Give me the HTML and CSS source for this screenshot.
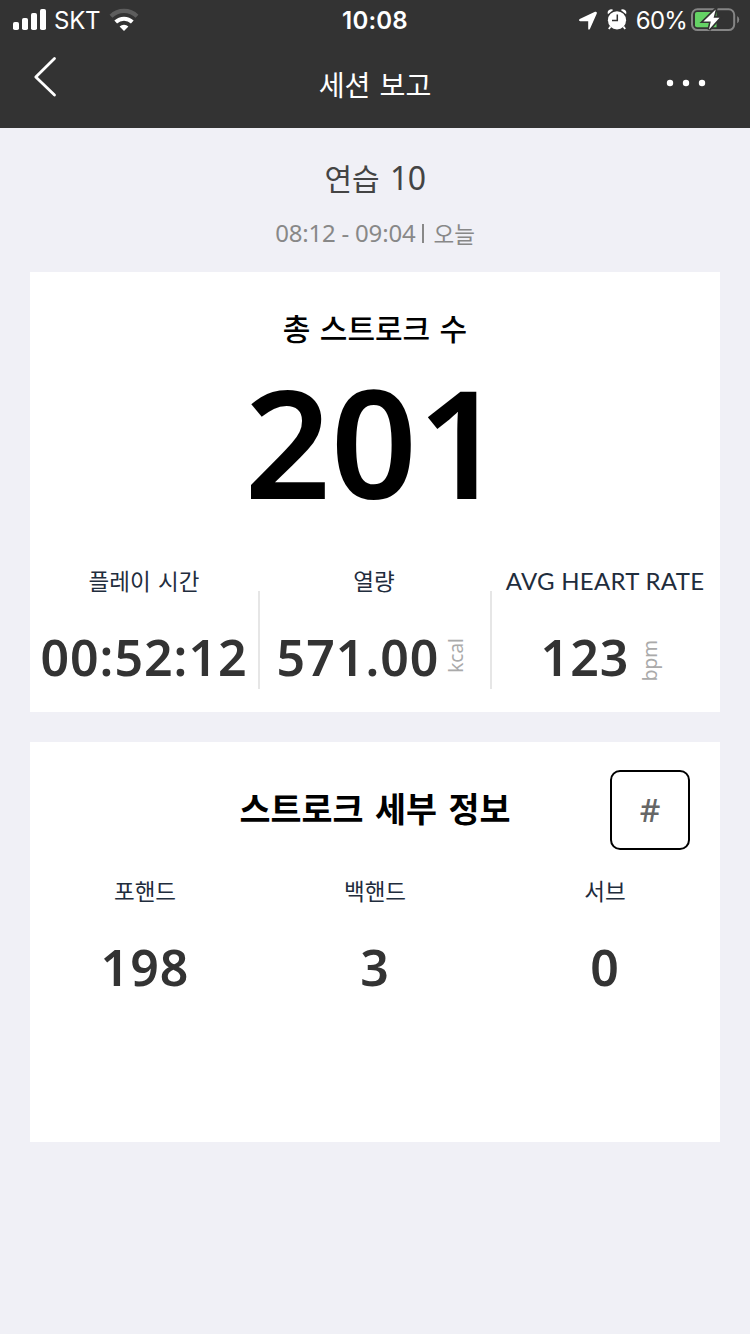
FILE: index.html
```html
<!DOCTYPE html>
<html lang="ko">
<head>
<meta charset="utf-8">
<title>세션 보고</title>
<link rel="stylesheet" href="styles.css">
</head>
<body>
<header class="top">
  <div class="status">
    <div class="status-left">
      <svg class="signal" width="34" height="22" viewBox="0 0 34 22" fill="#fff"><rect x="0" y="13" width="6" height="8" rx="1.8"/><rect x="9" y="9" width="6" height="12" rx="1.8"/><rect x="18" y="4" width="6" height="17" rx="1.8"/><rect x="27" y="0" width="6" height="21" rx="1.8"/></svg>
      <span class="carrier">SKT</span>
      <svg class="wifi" width="30" height="22" viewBox="0 0 30 22" fill="none"><path d="M2 7.2A18.5 18.5 0 0 1 28 7.2" stroke="#5d5d5d" stroke-width="4.2"/><path d="M6.7 13A12.2 12.2 0 0 1 23.3 13" stroke="#fff" stroke-width="4"/><path d="M10.6 17.4A6.5 6.5 0 0 1 19.4 17.4L15 22Z" fill="#fff"/></svg>
    </div>
    <span class="clock">10:08</span>
    <div class="status-right">
      <svg class="location" width="18" height="18" viewBox="0 0 18 18"><path d="M.7 7 16-.2Q18.4-.8 17.8 1.6L11 16.8Q9.7 18.8 9.2 16.8V9.2H1.2Q-1 8.4.7 7Z" fill="#fff"/></svg>
      <svg class="alarm" width="20" height="21" viewBox="0 0 20 21"><path d="M3.6 17.5 1.8 20M16.4 17.5l1.8 2.5" stroke="#fff" stroke-width="1.8"/><circle cx="10" cy="11.3" r="9.1" fill="#fff"/><path d="M.9 5.2Q-.1 1.8 3 .6 5-.1 6.2 1.1ZM19.1 5.2Q20.1 1.8 17 .6 15-.1 13.8 1.1Z" fill="#fff"/><path d="M10.3 5.5v6H5" stroke="#333" stroke-width="1.5" fill="none"/></svg>
      <span class="percent">60%</span>
      <svg class="battery" width="48" height="24" viewBox="0 0 48 24"><rect x="1" y="1.3" width="42.2" height="20.8" rx="5.5" fill="none" stroke="#858585" stroke-width="2"/><path d="M46.2 8q2 1 2 3.6t-2 3.6Z" fill="#858585"/><path d="M6 4H25.5V19.2H6Q4 19.2 4 17.2V6Q4 4 6 4Z" fill="#65d265"/><path d="M24.7 1.4 12.4 13.5H19.8L18 21.6 28.5 9.7H22.6Z" fill="#fff" stroke="#333" stroke-width="3.2" paint-order="stroke"/></svg>
    </div>
  </div>
  <nav class="nav">
    <svg class="back" width="24" height="40" viewBox="0 0 24 40"><path d="M20.5 1.5 1.8 20 20.5 38" fill="none" stroke="#fff" stroke-width="2.8" stroke-linecap="round" stroke-linejoin="round"/></svg>
    <h1 class="title">세션 보고</h1>
    <svg class="more" width="40" height="8" viewBox="0 0 40 8" fill="#fff"><circle cx="4" cy="4" r="3.2"/><circle cx="20" cy="4" r="3.2"/><circle cx="36" cy="4" r="3.2"/></svg>
  </nav>
</header>
<main>
  <section class="intro">
    <h2 class="session">연습 <span class="session-no">10</span></h2>
    <p class="when"><span>08:12 - 09:04</span><i class="bar"></i><span class="day">오늘</span></p>
  </section>
  <section class="card summary">
    <h3 class="summary-title">총 스트로크 수</h3>
    <div class="total">201</div>
    <div class="stats">
      <div class="stat"><div class="label">플레이 시간</div><div class="value">00:52:12</div></div>
      <div class="stat ruled"><div class="label">열량</div><div class="value">571.00<span class="unit">kcal</span></div></div>
      <div class="stat ruled"><div class="label latin">AVG HEART RATE</div><div class="value rate">123<span class="unit bpm">bpm</span></div></div>
    </div>
  </section>
  <section class="card details">
    <div class="details-head"><h3 class="details-title">스트로크 세부 정보</h3><button class="hash">#</button></div>
    <div class="stats">
      <div class="stat"><div class="label">포핸드</div><div class="value">198</div></div>
      <div class="stat"><div class="label">백핸드</div><div class="value">3</div></div>
      <div class="stat"><div class="label">서브</div><div class="value">0</div></div>
    </div>
  </section>
</main>
</body>
</html>
```
FILE: styles.css
```css
* { box-sizing: border-box; }
body { margin: 0; min-height: 1334px; background: #f0f0f6; color: #333; font-family: "Noto Sans", "Noto Sans CJK KR", sans-serif; }
h1, h2, h3, p { margin: 0; font-weight: 400; }
svg { display: block; overflow: visible; flex: none; }

.top { height: 128px; background: #333; color: #fff; }
.status { display: grid; grid-template-columns: 1fr auto 1fr; height: 40px; padding: 0 11px 0 13px; font: 400 24px/42px Inter, sans-serif; }
.status-left, .status-right { display: flex; align-items: flex-start; }
.status-right { justify-content: flex-end; }
.signal { margin-top: 9px; }
.carrier { margin-left: 7px; letter-spacing: -.2px; }
.wifi { margin: 9px 0 0 9px; }
.clock { font-weight: 600; letter-spacing: .2px; margin-right: 2px; }
.location { margin: 12px 10px 0 0; }
.alarm { margin: 9px 9px 0 0; }
.percent { letter-spacing: -.8px; }
.battery { margin: 8px 0 0 4px; }
.nav { display: grid; grid-template-columns: 1fr auto 1fr; height: 88px; padding: 0 44px 0 34px; }
.back { margin-top: 17px; }
.title { font: 400 28.2px/88px "Noto Sans CJK KR", sans-serif; word-spacing: 1px; padding-left: 10px; }
.more { justify-self: end; margin-top: 39px; }

.intro { height: 144px; padding-top: 25px; display: flex; flex-direction: column; align-items: center; }
.session { font: 400 30px/48px "Noto Sans CJK KR", sans-serif; color: #444; word-spacing: 2px; }
.session-no { font-family: "Noto Sans"; font-size: 32px; letter-spacing: -.6px; }
.when { display: flex; align-items: center; margin-top: 13px; font-size: 24px; line-height: 36px; color: #888; letter-spacing: -.2px; }
.bar { width: 2px; height: 19px; margin: 0 9px 0 7px; background: #888; }
.day { font: 400 22.5px/36px "Noto Sans CJK KR", sans-serif; letter-spacing: 0; }

.card { margin: 0 30px 30px; background: #fff; }
.summary { height: 440px; padding-top: 31px; }
.summary-title { height: 42px; font: 500 30px/48px "Noto Sans CJK KR", sans-serif; color: #000; text-align: center; word-spacing: 1px; }
.total { height: 210px; line-height: 192px; font-size: 151px; font-weight: 600; color: #000; text-align: center; padding-right: 2px; }
.stats { display: grid; grid-template-columns: 1fr 1fr 1fr; }
.summary .stats { grid-template-columns: 228px 232px 230px; }
.stat { display: flex; flex-direction: column; align-items: center; position: relative; }
.ruled::before { content: ""; position: absolute; left: 0; top: 36px; width: 2px; height: 98px; background: #e6e6e6; }
.label { font: 400 22.5px/50px "Noto Sans CJK KR", sans-serif; color: #1f2d3d; word-spacing: 1px; white-space: nowrap; }
.latin { font-family: Lato, sans-serif; font-size: 24px; word-spacing: 0; line-height: 51px; height: 50px; letter-spacing: .3px; }
.value { display: flex; align-items: center; height: 104px; font-size: 50px; line-height: 104px; font-weight: 600; letter-spacing: 1px; }
.rate { padding-right: 6px; }
.unit { writing-mode: vertical-rl; transform: rotate(180deg); font-size: 19px; line-height: 24px; font-weight: 400; color: #aaa; letter-spacing: 0; margin: 0 3px 4px 5px; }
.bpm { margin: 8px 1px 0 9px; }

.details { height: 400px; padding-top: 28px; }
.details-head { display: grid; grid-template-columns: 1fr auto 1fr; padding-right: 30px; padding-left: 30px; }
.details-title { grid-column: 2; font: 700 33.7px/76px "Noto Sans CJK KR", sans-serif; color: #000; word-spacing: 2px; }
.hash { justify-self: end; width: 80px; height: 80px; padding: 0; border: 2px solid #000; border-radius: 10px; background: #fff; color: #666; font: 500 32px/74px "Noto Sans", sans-serif; }
.details .stats { margin-top: 15px; }
```
